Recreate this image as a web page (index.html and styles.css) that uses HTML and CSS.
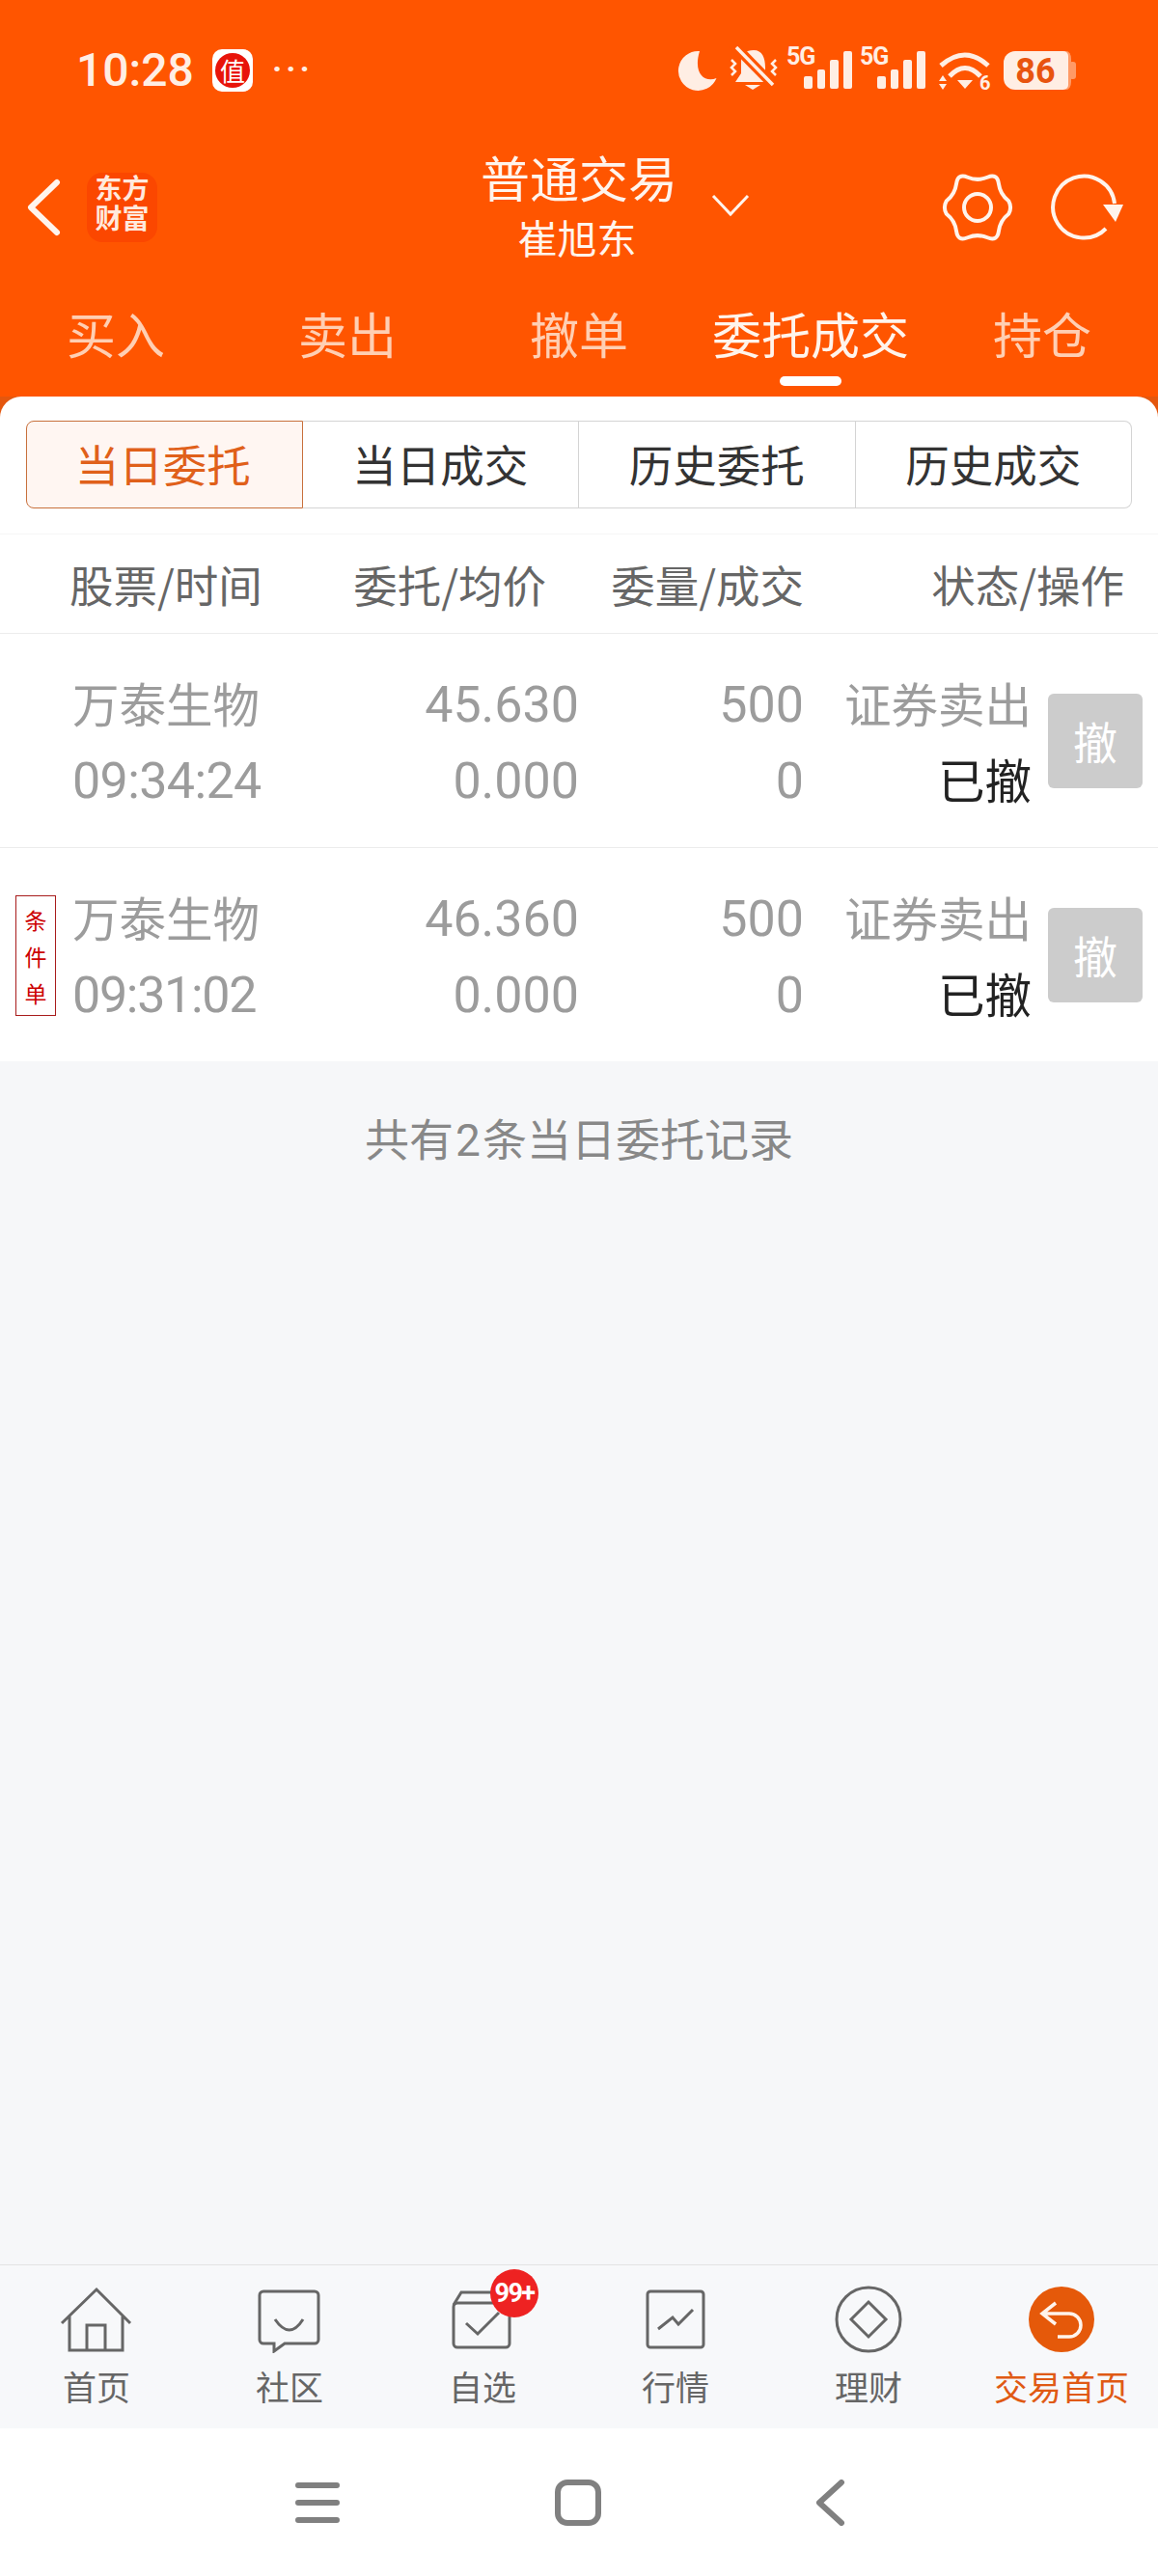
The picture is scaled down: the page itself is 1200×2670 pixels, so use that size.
FILE: index.html
```html
<!DOCTYPE html>
<html lang="zh-CN">
<head>
  <meta charset="UTF-8" />
  <meta name="viewport" content="width=device-width, initial-scale=1.0"/>
  <title>委托成交</title>
  <link rel="stylesheet" href="styles.css">
</head>
<body>
<div class="phone">

  <div class="top">
    <!-- Status bar -->
    <div class="status">
      <span class="clock">10:28</span>
      <span class="app-badge"><span class="app-badge-dot">值</span></span>
      <span class="more">···</span>
      <div class="status-icons">
        <svg class="moon" width="41" height="42" viewBox="0 0 41 42"><path d="M23 1A20.5 20.5 0 1 0 40.5 29C28 34 16 24 23 1Z"/></svg>
        <svg class="bell" width="52" height="46" viewBox="0 0 52 46">
          <path d="M26 4C35 4 38 12 38 22V30L42 37H7L13 28V16C13 8 18 4 26 4Z"/>
          <path class="cut" d="M2 -5L50 44"/>
          <path class="slash" d="M8 1L46 40"/>
          <path d="M17 40H33L25 45Z"/>
          <path class="wave" d="M3 14l4 4l-4 4l4 4l-4 4M49 14l-4 4l4 4l-4 4l4 4"/>
        </svg>
        <svg class="sig" width="68" height="46" viewBox="0 0 68 46">
          <text x="0" y="20">5G</text>
          <rect x="18" y="32" width="9" height="13" rx="2"/><rect x="32" y="25" width="8" height="20" rx="2"/><rect x="45" y="15" width="9" height="30" rx="2"/><rect x="59" y="6" width="9" height="39" rx="2"/>
        </svg>
        <svg class="sig" width="68" height="46" viewBox="0 0 68 46">
          <text x="0" y="20">5G</text>
          <rect x="18" y="32" width="9" height="13" rx="2"/><rect x="32" y="25" width="8" height="20" rx="2"/><rect x="45" y="15" width="9" height="30" rx="2"/><rect x="59" y="6" width="9" height="39" rx="2"/>
        </svg>
        <svg class="wifi" width="55" height="40" viewBox="0 0 55 40">
          <path class="arc" d="M3 14Q28 -8 52 14M12 25Q28 8 44 25"/>
          <path d="M20 29H36L28 38ZM1 30L5 24L9 30ZM1 33H9L5 39Z"/>
          <text x="43" y="39">6</text>
        </svg>
        <svg class="batt" width="76" height="42" viewBox="0 0 76 42">
          <rect class="tip" x="60" y="1" width="10" height="40" rx="8"/>
          <rect class="tip" x="68" y="12" width="7" height="18" rx="3"/>
          <path d="M12 1H62a5 5 0 0 1 5 5V36a5 5 0 0 1-5 5H12A12 12 0 0 1 0 29V13A12 12 0 0 1 12 1Z"/>
          <text x="33" y="34">86</text>
        </svg>
      </div>
    </div>

    <!-- Title bar -->
    <div class="header">
      <div class="header-left">
        <svg class="back" width="36" height="60" viewBox="0 0 36 60"><path d="M32 4L5 30L32 56"/></svg>
        <div class="logo">东方<br>财富</div>
      </div>
      <div class="title-stack">
        <div class="title">普通交易</div>
        <div class="account">崔旭东</div>
      </div>
      <svg class="title-chevron" width="40" height="24" viewBox="0 0 40 24"><path d="M2 2L20 21L38 2"/></svg>
      <div class="header-right">
        <svg class="line-icon" width="78" height="72" viewBox="-3 0 78 72">
          <path d="M68.2 42.75Q72 36 68.2 29.25Q59.4 22.5 57.95 11.5Q56.5 0.5 46.25 4.75Q36 9 25.75 4.75Q15.5 0.5 14.05 11.5Q12.6 22.5 3.8 29.25Q0 36 3.8 42.75Q12.6 49.5 14.05 60.5Q15.5 71.5 25.75 67.25Q36 63 46.25 67.25Q56.5 71.5 57.95 60.5Q59.4 49.5 68.2 42.75Z"/>
          <circle cx="36" cy="36" r="14"/>
        </svg>
        <svg class="line-icon refresh" width="80" height="72" viewBox="0 0 80 72">
          <path d="M59 58A32 32 0 1 1 68 32"/>
          <polygon points="56,33 77,33 69,51"/>
        </svg>
      </div>
    </div>

    <!-- Trade tabs -->
    <div class="trade-tabs">
      <div class="trade-tab">买入</div>
      <div class="trade-tab">卖出</div>
      <div class="trade-tab">撤单</div>
      <div class="trade-tab on">委托成交<span class="bar"></span></div>
      <div class="trade-tab">持仓</div>
    </div>
  </div>

  <div class="panel-back">
    <div class="panel">
      <div class="segment">
        <div class="seg on">当日委托</div>
        <div class="seg">当日成交</div>
        <div class="seg">历史委托</div>
        <div class="seg">历史成交</div>
      </div>

      <div class="thead">
        <div>股票/时间</div>
        <div>委托/均价</div>
        <div>委量/成交</div>
        <div>状态/操作</div>
      </div>

      <div class="order">
        <div class="flag-cell"></div>
        <div class="cell name">万泰生物</div>
        <div class="cell num right">45.630</div>
        <div class="cell num right">500</div>
        <div class="cell right">证券卖出</div>
        <div class="cancel-cell"><span class="cancel">撤</span></div>
        <div class="cell num time">09:34:24</div>
        <div class="cell num right">0.000</div>
        <div class="cell num right">0</div>
        <div class="cell right state">已撤</div>
      </div>

      <div class="order last">
        <div class="flag-cell"><span class="flag">条<br>件<br>单</span></div>
        <div class="cell name">万泰生物</div>
        <div class="cell num right">46.360</div>
        <div class="cell num right">500</div>
        <div class="cell right">证券卖出</div>
        <div class="cancel-cell"><span class="cancel">撤</span></div>
        <div class="cell num time tight">09:31:02</div>
        <div class="cell num right">0.000</div>
        <div class="cell num right">0</div>
        <div class="cell right state">已撤</div>
      </div>
    </div>
  </div>

  <div class="empty">共有<span class="empty-num">2</span>条当日委托记录</div>

  <!-- Bottom navigation -->
  <div class="nav">
    <div class="nav-item">
      <svg class="nav-icon" width="80" height="70" viewBox="0 0 80 70"><path d="M4 39L40 4L75 39M12 32V67H67V32M30 67V41H49V67"/></svg>
      <span>首页</span>
    </div>
    <div class="nav-item">
      <svg class="nav-icon" width="80" height="70" viewBox="0 0 80 70"><path d="M13 6H66a4 4 0 0 1 4 4V56a4 4 0 0 1-4 4H35L24 68V60H13a4 4 0 0 1-4-4V10a4 4 0 0 1 4-4ZM25 35Q40 57 54 35"/></svg>
      <span>社区</span>
    </div>
    <div class="nav-item">
      <svg class="nav-icon" width="80" height="70" viewBox="0 0 80 70"><rect x="10" y="18" width="58" height="46" rx="4"/><path d="M10 20L18 7H60L68 20M23 39L35 50L57 28"/></svg>
      <span class="count">99+</span>
      <span>自选</span>
    </div>
    <div class="nav-item">
      <svg class="nav-icon" width="80" height="70" viewBox="0 0 80 70"><rect x="11" y="6" width="58" height="58" rx="3"/><path d="M22 45L37 33L43 40L58 25"/></svg>
      <span>行情</span>
    </div>
    <div class="nav-item">
      <svg class="nav-icon" width="80" height="70" viewBox="0 0 80 70"><circle cx="40" cy="35" r="33"/><path d="M40 17L58 35L40 53L22 35Z"/></svg>
      <span>理财</span>
    </div>
    <div class="nav-item on">
      <svg class="nav-icon" width="80" height="70" viewBox="0 0 80 70"><circle class="disc" cx="40" cy="35" r="34"/><path class="ret" d="M34 18L20 29L34 40M20 29H48a12 12 0 0 1 0 24H36"/></svg>
      <span>交易首页</span>
    </div>
  </div>

  <!-- Android buttons -->
  <div class="sysbar">
    <svg class="sys" width="46" height="46" viewBox="0 0 46 46"><path d="M3 5H43M3 23H43M3 41H43"/></svg>
    <svg class="sys" width="48" height="48" viewBox="0 0 48 48"><rect x="3" y="3" width="42" height="42" rx="10"/></svg>
    <svg class="sys" width="32" height="48" viewBox="0 0 32 48"><path d="M27 3L4 24L27 45"/></svg>
  </div>
</div>
</body>
</html>
```

FILE: styles.css
```css
* {
  box-sizing: border-box;
}
body {
  margin: 0;
  font-family: "Noto Sans CJK SC", "Noto Sans", sans-serif;
  color: #333;
}
.phone {
  width: 1200px;
  height: 2670px;
  display: flex;
  flex-direction: column;
  background: #f6f7f9;
  overflow: hidden;
}

/* orange top */
.top {
  background: #ff5500;
  height: 411px;
  color: #fff4ec;
}
.status {
  height: 145px;
  padding: 48px 84px 0 79px;
  display: flex;
  align-items: flex-start;
}
.clock {
  font-family: Roboto, sans-serif;
  font-weight: 500;
  font-size: 48px;
  line-height: 50px;
  width: 141px;
  color: #ffeee4;
}
.app-badge {
  width: 42px;
  height: 44px;
  margin-top: 3px;
  background: #fff;
  border-radius: 10px;
  display: flex;
  align-items: center;
  justify-content: center;
}
.app-badge-dot {
  width: 36px;
  height: 36px;
  border-radius: 50%;
  background: #e8140a;
  color: #fff;
  font-size: 26px;
  line-height: 36px;
  text-align: center;
}
.more {
  margin-left: 20px;
  font-family: Roboto, sans-serif;
  font-weight: 700;
  font-size: 34px;
  line-height: 46px;
  letter-spacing: 4px;
  color: #ffeee4;
}
.status-icons {
  margin-left: auto;
  display: flex;
  align-items: flex-start;
  fill: #ffeee4;
}
.moon { margin-top: 4px; }
.bell { margin-left: 12px; }
.bell .cut { stroke: #ff5500; stroke-width: 10; fill: none; }
.bell .slash { stroke: #ffeee4; stroke-width: 3.5; fill: none; }
.bell .wave { stroke: #ffeee4; stroke-width: 2.5; fill: none; }
.sig { margin-left: 8px; margin-top: -1px; overflow: visible; }
.sig text {
  font-family: Roboto, sans-serif;
  font-weight: 700;
  font-size: 25px;
  letter-spacing: -1px;
}
.sig + .sig { margin-left: 8px; }
.wifi { margin-left: 13px; margin-top: 6px; overflow: visible; }
.wifi .arc { stroke: #ffeee4; stroke-width: 5; fill: none; }
.wifi text {
  font-family: Roboto, sans-serif;
  font-weight: 700;
  font-size: 20px;
}
.batt { margin-left: 13px; margin-top: 4px; }
.batt .tip { fill: #ff9a66; }
.batt text {
  font-family: Roboto, sans-serif;
  font-weight: 700;
  font-size: 36px;
  text-anchor: middle;
  fill: #e8540f;
}

/* title bar */
.header {
  height: 140px;
  padding: 0 33px 0 27px;
  display: flex;
  align-items: center;
}
.header-left {
  width: 471px;
  display: flex;
  align-items: center;
}
.back {
  fill: none;
  stroke: #fff4ec;
  stroke-width: 6;
  stroke-linecap: round;
  stroke-linejoin: round;
}
.logo {
  margin-left: 27px;
  width: 73px;
  height: 72px;
  border-radius: 16px;
  background: #fb4700;
  color: #ffe9dd;
  font-size: 28px;
  font-weight: 700;
  line-height: 31px;
  text-align: center;
  padding-top: 0;
}
.title-stack {
  width: 200px;
  text-align: center;
  margin-top: 0;
}
.title {
  font-size: 51px;
  line-height: 60px;
  white-space: nowrap;
}
.account {
  font-size: 41px;
  line-height: 64px;
  white-space: nowrap;
}
.title-chevron {
  margin-left: 39px;
  margin-top: -5px;
  fill: none;
  stroke: #fff4ec;
  stroke-width: 3;
}
.header-right {
  margin-left: auto;
  display: flex;
  align-items: center;
  gap: 35px;
}
.line-icon {
  fill: none;
  stroke: #fff4ec;
  stroke-width: 4;
}
.refresh polygon {
  fill: #fff4ec;
  stroke: none;
}

/* buy / sell tabs */
.trade-tabs {
  height: 126px;
  display: grid;
  grid-template-columns: repeat(5, 240px);
}
.trade-tab {
  padding-top: 30px;
  font-size: 51px;
  line-height: 60px;
  text-align: center;
  color: #ffcfb3;
}
.trade-tab.on {
  color: #fff4ec;
}
.bar {
  display: block;
  width: 64px;
  height: 10px;
  margin: 15px auto 0;
  border-radius: 5px;
  background: #fff;
}

/* white panel */
.panel-back {
  background: #e4570e;
}
.panel {
  background: #fff;
  border-radius: 22px 22px 0 0;
  padding-top: 25px;
}
.segment {
  margin: 0 27px;
  height: 91px;
  display: grid;
  grid-template-columns: repeat(4, 1fr);
}
.seg {
  border: 1.5px solid #d4d4d4;
  border-left: 0;
  font-size: 45.5px;
  line-height: 86px;
  text-align: center;
  color: #333;
}
.seg.on {
  border: 1.5px solid #c8703c;
  background: #fff6f2;
  color: #e0601a;
  border-radius: 8px 0 0 8px;
  padding-right: 3px;
}
.seg:last-child {
  border-radius: 0 8px 8px 0;
}
.thead {
  margin-top: 26px;
  height: 104px;
  border-top: 1px solid #f6f6f6;
  border-bottom: 1px solid #ececec;
  padding: 0 35px 0 72px;
  display: grid;
  grid-template-columns: 200px 294px 267px 1fr;
  align-items: center;
  text-align: right;
  font-size: 45.5px;
  color: #666;
}
.thead div {
  white-space: nowrap;
}
.thead div:first-child {
  text-align: left;
}
.order {
  height: 222px;
  border-bottom: 1px solid #ececec;
  display: grid;
  grid-template-columns: 75px 265px 260px 233px 236px 17px 98px;
  grid-template-rows: 79px 79px;
  align-content: center;
  align-items: center;
}
.order.last {
  height: 221px;
  border-bottom: 0;
}
.flag-cell {
  grid-row: 1 / 3;
  padding-left: 16px;
}
.flag {
  display: block;
  width: 42px;
  height: 125px;
  margin-top: 1px;
  border: 1.5px solid #a81c1c;
  color: #c00;
  font-size: 23px;
  line-height: 38px;
  text-align: center;
  padding-top: 5px;
}
.cell {
  font-size: 48.5px;
  line-height: 60px;
  color: #9c9c9c;
  white-space: nowrap;
}
.num {
  font-family: Roboto, sans-serif;
  font-size: 52px;
  padding-top: 6px;
}
.time {
  letter-spacing: -0.6px;
}
.time.tight {
  letter-spacing: -1.3px;
}
.right {
  text-align: right;
}
.state {
  color: #222;
}
.cancel-cell {
  grid-row: 1 / 3;
  grid-column: 7;
}
.cancel {
  display: block;
  width: 98px;
  height: 98px;
  border-radius: 6px;
  background: #ccc;
  color: #fff;
  font-size: 46px;
  line-height: 96px;
  text-align: center;
}
.order .cell:nth-child(7) {
  grid-column: 2;
}

/* count line */
.empty {
  flex: 1;
  padding-top: 48px;
  font-size: 46px;
  line-height: 60px;
  text-align: center;
  color: #888;
}
.empty-num {
  font-family: Roboto, sans-serif;
  margin: 0 2px;
}

/* bottom nav */
.nav {
  height: 170px;
  border-top: 1px solid #e3e3e3;
  background: #f7f8fa;
  display: grid;
  grid-template-columns: repeat(6, 200px);
}
.nav-item {
  position: relative;
  padding-top: 21px;
  display: flex;
  flex-direction: column;
  align-items: center;
  gap: 14px;
  font-size: 35px;
  line-height: 40px;
  color: #666;
}
.nav-icon {
  fill: none;
  stroke: #666;
  stroke-width: 3;
}
.nav-item.on {
  color: #e05a14;
}
.disc {
  fill: #e5590a;
  stroke: none;
}
.ret {
  stroke: #fff4ec;
  stroke-width: 3.5;
}
.count {
  position: absolute;
  left: 108px;
  top: 4px;
  width: 50px;
  height: 50px;
  border-radius: 50%;
  background: #ee2222;
  color: #fff;
  font-family: Roboto, sans-serif;
  font-weight: 700;
  font-size: 27px;
  line-height: 50px;
  text-align: center;
  letter-spacing: -1.5px;
}

/* system buttons */
.sysbar {
  height: 153px;
  background: #fff;
  padding: 0 323px 0 306px;
  display: flex;
  align-items: center;
  justify-content: space-between;
}
.sys {
  fill: none;
  stroke: #808080;
  stroke-width: 6;
  stroke-linecap: round;
  stroke-linejoin: round;
}
```
